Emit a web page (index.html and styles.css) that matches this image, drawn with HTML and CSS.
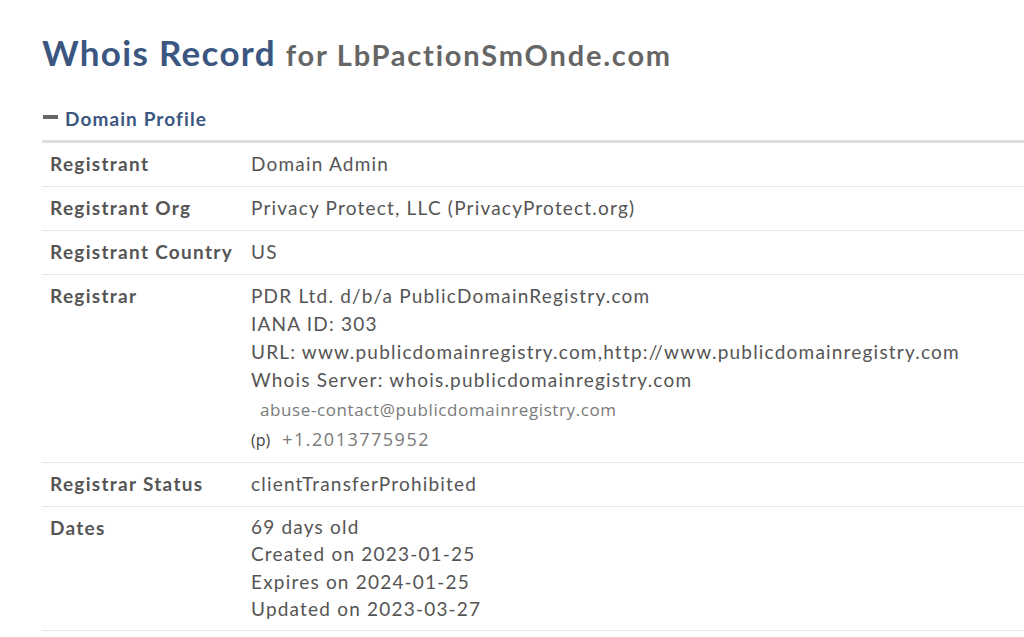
FILE: index.html
```html
<!DOCTYPE html>
<html lang="en">
<head>
  <meta charset="UTF-8">
  <meta name="viewport" content="width=device-width, initial-scale=1.0">
  <title>Whois Record for LbPactionSmOnde.com</title>
  <link rel="stylesheet" href="styles.css">
</head>
<body>
  <div class="page">
    <h1 class="title">Whois Record <span class="title-domain">for LbPactionSmOnde.com</span></h1>

    <!-- Profile section -->
    <h2 class="section-head"><span class="minus"></span>Domain Profile</h2>

    <table class="profile">
      <tr>
        <th>Registrant</th>
        <td>Domain Admin</td>
      </tr>
      <tr>
        <th>Registrant Org</th>
        <td>Privacy Protect, LLC (PrivacyProtect.org)</td>
      </tr>
      <tr>
        <th>Registrant Country</th>
        <td>US</td>
      </tr>
      <tr>
        <th>Registrar</th>
        <td>
          PDR Ltd. d/b/a PublicDomainRegistry.com<br>
          IANA ID: 303<br>
          URL: www.publicdomainregistry.com,http://www.publicdomainregistry.com<br>
          Whois Server: whois.publicdomainregistry.com<br>
          <div class="contact-mail">abuse-contact@publicdomainregistry.com</div>
          <div class="contact-phone"><span class="phone-tag">(p)</span>+1.2013775952</div>
        </td>
      </tr>
      <tr>
        <th>Registrar Status</th>
        <td>clientTransferProhibited</td>
      </tr>
      <tr>
        <th>Dates</th>
        <td class="dates">
          69 days old<br>
          Created on 2023-01-25<br>
          Expires on 2024-01-25<br>
          Updated on 2023-03-27
        </td>
      </tr>
    </table>
  </div>
</body>
</html>
```

FILE: styles.css
```css
* {
  margin: 0;
  padding: 0;
  box-sizing: border-box;
}

body {
  background: #fff;
  font-family: Lato, "Open Sans", sans-serif;
  color: #555;
}

.page {
  padding: 31px 0 0 42px;
}

.title {
  font-size: 35px;
  font-weight: 700;
  color: #3b5680;
  line-height: 43px;
  letter-spacing: 1.3px;
  white-space: nowrap;
}

.title-domain {
  font-size: 29px;
  color: #666;
  letter-spacing: 1.8px;
}

.section-head {
  display: flex;
  align-items: center;
  margin-top: 32px;
  font-size: 19px;
  font-weight: 700;
  color: #3b5680;
  line-height: 22px;
  letter-spacing: 1.1px;
}

.minus {
  display: inline-block;
  width: 15px;
  height: 4px;
  background: #666;
  margin: 0 7px 4px 1px;
}

.profile {
  width: 100%;
  margin-top: 10px;
  border-collapse: collapse;
  border-top: 3px solid #dedede;
  font-size: 19px;
  line-height: 28px;
  letter-spacing: 1.2px;
}

.profile tr {
  border-bottom: 1px solid #e6e6e6;
}

.profile th,
.profile td {
  text-align: left;
  vertical-align: top;
  padding: 7px 8px 8px;
}

.profile th {
  width: 201px;
  font-weight: 700;
  color: #555;
  letter-spacing: 1.3px;
  white-space: nowrap;
}

.profile td {
  font-weight: 400;
  color: #555;
  white-space: nowrap;
}

.profile .dates {
  line-height: 27.3px;
  padding-top: 6px;
}

/* contact lines look like pasted images in the original */
.contact-mail {
  font-family: "Open Sans", "Liberation Sans", sans-serif;
  font-size: 17px;
  color: #7a7a7a;
  letter-spacing: 0.6px;
  line-height: 30px;
  padding: 1px 0 0 9px;
}

.contact-phone {
  font-family: "Open Sans", "Liberation Sans", sans-serif;
  font-size: 18px;
  color: #7a7a7a;
  letter-spacing: 1.5px;
  line-height: 28px;
}

.phone-tag {
  color: #444;
  font-size: 16px;
  letter-spacing: 0;
  margin-right: 12px;
}
```
